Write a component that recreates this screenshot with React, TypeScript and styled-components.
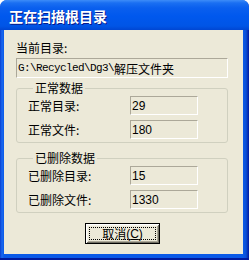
import React from "react";
import styled, { createGlobalStyle } from "styled-components";

const Global = createGlobalStyle`
  html, body { margin: 0; padding: 0; background: #ffffff; }
  body { font-family: "Noto Sans CJK SC", "Noto Sans", sans-serif; }
`;

const Window = styled.div`
  width: 249px;
  height: 260px;
  box-sizing: border-box;
  display: flex;
  flex-direction: column;
  border-radius: 7px 7px 0 0;
  background: linear-gradient(to right, #0a3fd0 0px, #1a68ef 2px, #0a5ae8 4px, #0a5ae8 calc(100% - 6px), #0a4fd6 calc(100% - 3px), #00199e 100%);
  box-shadow: inset 0 -2px 0 #00199e;
  overflow: hidden;
`;

const TitleBar = styled.div`
  height: 30px;
  flex: none;
  display: flex;
  align-items: center;
  padding-left: 9px;
  padding-top: 1px;
  box-sizing: border-box;
  background: linear-gradient(
    to bottom,
    #3d8cf8 0px,
    #1a6ff2 3px,
    #0a5fee 8px,
    #0058ee 16px,
    #0055e6 26px,
    #0046d2 30px
  );
`;

const Title = styled.span`
  color: #ffffff;
  font-family: "Noto Sans CJK SC", sans-serif;
  font-weight: 700;
  font-size: 14px;
  line-height: 14px;
  letter-spacing: 0px;
  text-shadow: 1px 1px 0 #0a1a8a;
`;

const Client = styled.div`
  flex: 1;
  margin: 0 6px 6px 4px;
  background: #ece9d8;
  padding: 12px 16px 10px 12px;
  display: flex;
  flex-direction: column;
  box-sizing: border-box;
`;

const Label = styled.div`
  font-family: "Noto Sans CJK SC", sans-serif;
  font-size: 12px;
  line-height: 12px;
  height: 12px;
  color: #000;
  white-space: nowrap;
`;

const Sunken = styled.div<{ $height: number }>`
  height: ${(p) => p.$height}px;
  box-sizing: border-box;
  border-top: 1px solid #aca899;
  border-left: 1px solid #aca899;
  border-bottom: 1px solid #ffffff;
  border-right: 1px solid #ffffff;
  display: flex;
  align-items: center;
  padding-left: 1px;
  color: #000;
  white-space: nowrap;
  overflow: hidden;
`;

const PathField = styled(Sunken)`
  margin-top: 4px;
  width: 212px;
  font-family: "Liberation Mono", "Noto Sans CJK SC", monospace;
  font-size: 11px;
  letter-spacing: -0.6px;
`;

const Cjk = styled.span`
  font-family: "Noto Sans CJK SC", sans-serif;
  font-size: 12px;
  letter-spacing: 0;
`;

const Group = styled.fieldset<{ $gap: number }>`
  margin: ${(p) => p.$gap}px 0 0 0;
  padding: 2px 0 3px 11px;
  width: 212px;
  box-sizing: border-box;
  border: 1px solid #d0d0bf;
  border-radius: 3px;
  min-width: 0;
`;

const Legend = styled.legend`
  margin-left: 5px;
  padding: 0 2px;
  font-family: "Noto Sans CJK SC", sans-serif;
  font-size: 12px;
  line-height: 12px;
  height: 12px;
  color: #000;
`;

const Rows = styled.div`
  display: grid;
  grid-template-columns: 102px 68px;
  row-gap: 5px;
  align-items: center;
`;

const Value = styled(Sunken)`
  font-family: "Liberation Sans", sans-serif;
  font-size: 12px;
`;

const ButtonRow = styled.div`
  margin-top: 10px;
  display: flex;
  justify-content: center;
  padding-left: 2px;
`;

const Button = styled.button`
  width: 75px;
  height: 21px;
  padding: 0;
  box-sizing: border-box;
  background: #ece9d8;
  border: 1px solid #000000;
  box-shadow: inset 1px 1px 0 #ffffff, inset -1px -1px 0 #716f64, inset 2px 2px 0 #f5f4ea, inset -2px -2px 0 #aca899;
  display: flex;
  align-items: stretch;
  justify-content: stretch;
  padding: 3px;
  cursor: default;
`;

const Focus = styled.span`
  flex: 1;
  outline: 1px dotted #000;
  outline-offset: -1px;
  display: flex;
  align-items: center;
  justify-content: center;
  font-family: "Noto Sans CJK SC", sans-serif;
  font-size: 12px;
  line-height: 12px;
  color: #000;
  u { text-decoration: underline; text-underline-offset: 1px; }
`;

const Mono = styled.span`
  font-family: "Liberation Sans", sans-serif;
  font-size: 12px;
`;

type Row = { label: string; value: string };

const groups: { title: string; gap: number; rows: Row[] }[] = [
  {
    title: "正常数据",
    gap: 4,
    rows: [
      { label: "正常目录:", value: "29" },
      { label: "正常文件:", value: "180" },
    ],
  },
  {
    title: "已删除数据",
    gap: 9,
    rows: [
      { label: "已删除目录:", value: "15" },
      { label: "已删除文件:", value: "1330" },
    ],
  },
];

export default function App() {
  return (
    <>
      <Global />
      <Window>
        <TitleBar>
          <Title>正在扫描根目录</Title>
        </TitleBar>
        <Client>
          <Label>当前目录:</Label>
          <PathField $height={20}>
            G:\Recycled\Dg3\<Cjk>解压文件夹</Cjk>
          </PathField>
          {groups.map((g) => (
            <Group key={g.title} $gap={g.gap}>
              <Legend>{g.title}</Legend>
              <Rows>
                {g.rows.map((r) => (
                  <React.Fragment key={r.label}>
                    <Label>{r.label}</Label>
                    <Value $height={19}>{r.value}</Value>
                  </React.Fragment>
                ))}
              </Rows>
            </Group>
          ))}
          <ButtonRow>
            <Button type="button">
              <Focus>
                取消<Mono>(<u>C</u>)</Mono>
              </Focus>
            </Button>
          </ButtonRow>
        </Client>
      </Window>
    </>
  );
}
